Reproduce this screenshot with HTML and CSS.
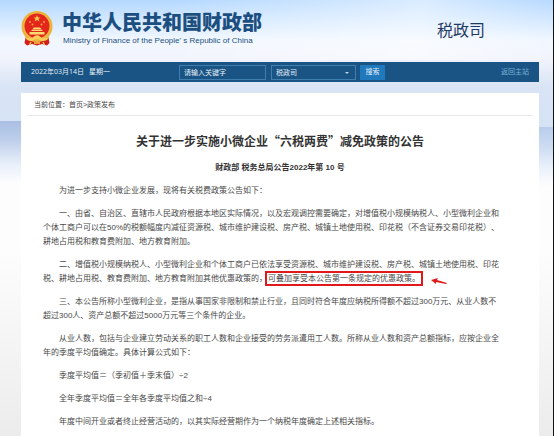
FILE: index.html
```html
<!DOCTYPE html>
<html lang="zh-CN">
<head>
<meta charset="utf-8">
<meta name="viewport" content="width=device-width, initial-scale=1">
<title>中华人民共和国财政部 税政司</title>
<link rel="stylesheet" href="styles.css">
</head>
<body>
<div class="page">
  <header class="masthead">
    <svg class="emblem" viewBox="0 0 64 70" aria-hidden="true">
      <path d="M10 48 L7 64 L12 69 L22 66 L32 69 L42 66 L52 69 L57 64 L54 48 Z" fill="#d3201c"/>
      <circle cx="32" cy="31" r="31" fill="#f0b840"/>
      <circle cx="32" cy="31" r="29" fill="none" stroke="#e3a233" stroke-width="1"/>
      <circle cx="32" cy="30" r="25" fill="#e2261c"/>
      <path d="M32 8 l2 5 h5 l-4 3 2 5 -5 -3 -5 3 2 -5 -4 -3 h5 Z" fill="#ffc84e"/>
      <g fill="#f9a13c"><circle cx="18" cy="22" r="2"/><circle cx="46" cy="22" r="2"/><circle cx="23" cy="27" r="2"/><circle cx="41" cy="27" r="2"/></g>
      <path d="M23 36 L26 33 H38 L41 36 Z M20 40 L23 37 H41 L44 40 Z M17 42 H47 V47 H17 Z" fill="#ffdc73"/>
      <path d="M8 52 Q20 58 26 51 Q32 46 38 51 Q44 58 56 52 L52 58 Q42 62 38 58 Q32 54 26 58 Q22 62 12 58 Z" fill="#f8cf5c"/>
      <path d="M20 62 L17 68 M26 64 H38 M44 62 L47 68" stroke="#f6c24b" stroke-width="3"/>
    </svg>
    <div class="brand">
      <div class="brand-cn">中华人民共和国财政部</div>
      <div class="brand-en">Ministry of Finance of the People' s Republic of China</div>
    </div>
    <div class="department">税政司</div>
  </header>

  <nav class="toolbar">
    <div class="date"><span>2022年03月14日</span><span>星期一</span></div>
    <form class="search">
      <input class="field keyword" type="text" aria-label="关键字" placeholder="请输入关键字">
      <span class="picker">
        <select class="field scope" aria-label="搜索范围"><option>税政司</option></select>
        <svg class="caret" viewBox="0 0 4 2" aria-hidden="true"><path d="M0 0 H4 L2 2 Z" fill="#b9d8ee"/></svg>
      </span>
      <button class="submit" type="button">搜索</button>
    </form>
    <a class="back" href="#">返回主站</a>
  </nav>

  <main class="panel">
    <div class="crumbs">当前位置：<a href="#">首页</a>&gt;<a href="#">政策发布</a></div>
    <article class="article">
      <h1>关于进一步实施小微企业“六税两费”减免政策的公告</h1>
      <h2>财政部 税务总局公告2022年第 10 号</h2>
      <p>为进一步支持小微企业发展，现将有关税费政策公告如下：</p>
      <p>一、由省、自治区、直辖市人民政府根据本地区实际情况，以及宏观调控需要确定，对增值税小规模纳税人、小型微利企业和<br>个体工商户可以在50%的税额幅度内减征资源税、城市维护建设税、房产税、城镇土地使用税、印花税（不含证券交易印花税）、<br>耕地占用税和教育费附加、地方教育附加。</p>
      <p>二、增值税小规模纳税人、小型微利企业和个体工商户已依法享受资源税、城市维护建设税、房产税、城镇土地使用税、印花<br>税、耕地占用税、教育费附加、地方教育附加其他优惠政策的，<mark class="highlight">可叠加享受本公告第一条规定的优惠政策。<svg class="arrow" viewBox="0 0 16 8" aria-hidden="true"><path d="M0 2 L7 0 L6 2 L16 5 L15 6 L5 4 L5 6 Z" fill="#e01a1a"/></svg></mark></p>
      <p>三、本公告所称小型微利企业，是指从事国家非限制和禁止行业，且同时符合年度应纳税所得额不超过300万元、从业人数不<br>超过300人、资产总额不超过5000万元等三个条件的企业。</p>
      <p>从业人数，包括与企业建立劳动关系的职工人数和企业接受的劳务派遣用工人数。所称从业人数和资产总额指标，应按企业全<br>年的季度平均值确定。具体计算公式如下：</p>
      <p>季度平均值＝（季初值＋季末值）÷2</p>
      <p>全年季度平均值＝全年各季度平均值之和÷4</p>
      <p>年度中间开业或者终止经营活动的，以其实际经营期作为一个纳税年度确定上述相关指标。</p>
    </article>
  </main>
</div>
</body>
</html>
```
FILE: styles.css
```css
* {
  box-sizing: border-box;
}

body {
  margin: 0;
  font-family: "Liberation Sans", "Noto Sans CJK SC", sans-serif;
  font-size: 8px;
  line-height: 14px;
  color: #484848;
  text-spacing-trim: space-all;
}

a {
  color: inherit;
  text-decoration: none;
}

.page {
  min-height: 100vh;
  padding: 0 14px 0 21px;
  border-right: 1px solid #111;
  background:
    linear-gradient(#a9bfe3 0, #bccdea 18px, #e9f0fa 44px, #fdfdfd 62px) left 121px / 21px 62px no-repeat,
    linear-gradient(#b9cdeb 0, #cddcf2 20px, #ecf2fb 42px, #fdfdfd 60px) right 127px / 14px 60px no-repeat,
    linear-gradient(100deg, transparent 30%, rgba(255, 255, 255, 0.5) 75%, transparent) top / 100% 60px no-repeat,
    linear-gradient(#b4d8ff 0, #d3e8ff 20px, #f1f7ff 40px, #f2f4fc 58px, #d9e4f5 86px, #d5e3f5 130px, #fdfdfd 183px, #fdfdfd 250px, #f5f5f5 340px, #ececec 436px);
}

.masthead {
  display: flex;
  align-items: flex-start;
  height: 62px;
  padding: 11px 54px 0 0;
}

.emblem {
  width: 32px;
  height: 35px;
}

.brand {
  flex: 1;
  padding-left: 9px;
  color: #1c4f80;
}

.brand-cn {
  font-size: 20px;
  line-height: 25px;
  font-weight: 900;
}

.brand-en {
  padding-left: 1px;
  font-size: 8px;
  line-height: 10px;
}

.department {
  font-size: 16px;
  line-height: 40px;
  color: #1f3864;
}

.toolbar {
  display: grid;
  grid-template-columns: 148px 1fr auto;
  align-items: center;
  height: 20px;
  padding: 0 10px;
  background: #1a5484;
  color: #e4eff8;
  font-size: 7px;
}

.date {
  display: flex;
  gap: 5px;
  font-family: "Open Sans", "Noto Sans CJK SC", sans-serif;
}

.search {
  display: flex;
  align-items: center;
}

.field {
  height: 15px;
  margin: 0;
  padding: 0 4px;
  border: 1px solid #3f7fb0;
  border-radius: 0;
  background: transparent;
  color: #e4eff8;
  font: inherit;
  appearance: none;
}

.keyword {
  width: 87px;
}

.keyword::placeholder {
  color: #e4eff8;
  opacity: 1;
}

.picker {
  position: relative;
  display: flex;
  margin: 0 4px 0 5px;
}

.scope {
  width: 85px;
}

.caret {
  position: absolute;
  right: 7px;
  top: 7px;
  width: 4px;
  height: 2px;
}

.submit {
  width: 25px;
  height: 15px;
  padding: 0;
  border: 0;
  background: #2078bd;
  color: #e4eff8;
  font: inherit;
}

.back {
  color: #79b0d8;
}

.panel {
  margin-top: 11px;
  background: #fff;
}

.crumbs {
  margin: 0 6px;
  padding: 5px 7px 3px;
  border-bottom: 1px solid #e6e9ed;
  font-size: 7px;
}

.article {
  padding: 15px 22px 7px;
}

h1 {
  margin: 0 0 10px;
  font-family: "Noto Sans CJK SC", sans-serif;
  font-size: 12px;
  line-height: 20px;
  text-align: center;
  color: #333;
}

h2 {
  margin: 0 0 9px;
  font-size: 8px;
  line-height: 14px;
  text-align: center;
  color: #333;
}

p {
  margin: 0 0 9px;
  text-indent: 2em;
  white-space: nowrap;
}

.highlight {
  position: relative;
  padding: 1px;
  outline: 2px solid #e01a1a;
  background: none;
  color: inherit;
}

.arrow {
  position: absolute;
  left: calc(100% + 10px);
  top: 5px;
  width: 16px;
  height: 8px;
}
```
